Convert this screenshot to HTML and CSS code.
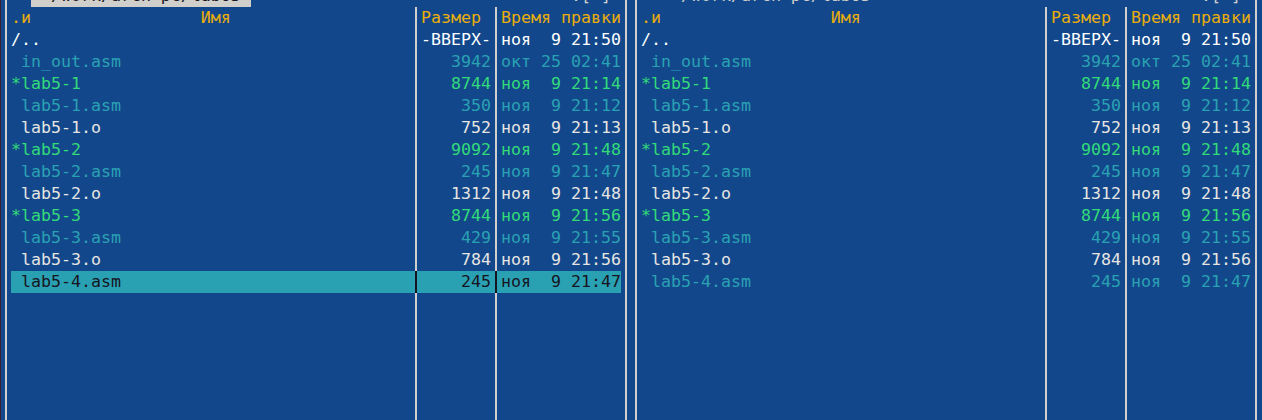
FILE: index.html
```html
<!DOCTYPE html>
<html lang="ru">
<head>
<meta charset="utf-8">
<title>mc</title>
<link rel="stylesheet" href="styles.css">
</head>
<body>
<div class="screen">
  <!-- LEFT PANEL (active) -->
  <div class="panel">
    <div class="col edge"></div>
    <div class="col name">
      <div class="cell top"><span class="frame">&lt;─</span><span class="path active"> ~/work/arch-pc/lab05 </span><span class="frame">────────────────</span></div>
      <div class="cell hdr">.и                 Имя</div>
      <div class="cell dir">/..</div>
      <div class="cell src"> in_out.asm</div>
      <div class="cell exe">*lab5-1</div>
      <div class="cell src"> lab5-1.asm</div>
      <div class="cell nrm"> lab5-1.o</div>
      <div class="cell exe">*lab5-2</div>
      <div class="cell src"> lab5-2.asm</div>
      <div class="cell nrm"> lab5-2.o</div>
      <div class="cell exe">*lab5-3</div>
      <div class="cell src"> lab5-3.asm</div>
      <div class="cell nrm"> lab5-3.o</div>
      <div class="cell sel"> lab5-4.asm</div>
    </div>
    <div class="col sep">
      <div class="cell top"><span class="frame">─</span></div>
      <div class="cell"></div><div class="cell"></div><div class="cell"></div><div class="cell"></div>
      <div class="cell"></div><div class="cell"></div><div class="cell"></div><div class="cell"></div>
      <div class="cell"></div><div class="cell"></div><div class="cell"></div><div class="cell"></div>
      <div class="cell sel-sep"></div>
    </div>
    <div class="col size">
      <div class="cell top"><span class="frame">───────</span></div>
      <div class="cell hdr left">Размер</div>
      <div class="cell dir">-ВВЕРХ-</div>
      <div class="cell src">3942</div>
      <div class="cell exe">8744</div>
      <div class="cell src">350</div>
      <div class="cell nrm">752</div>
      <div class="cell exe">9092</div>
      <div class="cell src">245</div>
      <div class="cell nrm">1312</div>
      <div class="cell exe">8744</div>
      <div class="cell src">429</div>
      <div class="cell nrm">784</div>
      <div class="cell sel">245</div>
    </div>
    <div class="col sep">
      <div class="cell top"><span class="frame">─</span></div>
      <div class="cell"></div><div class="cell"></div><div class="cell"></div><div class="cell"></div>
      <div class="cell"></div><div class="cell"></div><div class="cell"></div><div class="cell"></div>
      <div class="cell"></div><div class="cell"></div><div class="cell"></div><div class="cell"></div>
      <div class="cell sel-sep"></div>
    </div>
    <div class="col time">
      <div class="cell top"><span class="frame">───────.[^]&gt;</span></div>
      <div class="cell hdr">Время правки</div>
      <div class="cell dir">ноя  9 21:50</div>
      <div class="cell src">окт 25 02:41</div>
      <div class="cell exe">ноя  9 21:14</div>
      <div class="cell src">ноя  9 21:12</div>
      <div class="cell nrm">ноя  9 21:13</div>
      <div class="cell exe">ноя  9 21:48</div>
      <div class="cell src">ноя  9 21:47</div>
      <div class="cell nrm">ноя  9 21:48</div>
      <div class="cell exe">ноя  9 21:56</div>
      <div class="cell src">ноя  9 21:55</div>
      <div class="cell nrm">ноя  9 21:56</div>
      <div class="cell sel">ноя  9 21:47</div>
    </div>
    <div class="col edge"></div>
  </div>

  <!-- RIGHT PANEL (inactive) -->
  <div class="panel">
    <div class="col edge"></div>
    <div class="col name">
      <div class="cell top"><span class="frame">&lt;─</span><span class="path"> ~/work/arch-pc/lab05 </span><span class="frame">────────────────</span></div>
      <div class="cell hdr">.и                 Имя</div>
      <div class="cell dir">/..</div>
      <div class="cell src"> in_out.asm</div>
      <div class="cell exe">*lab5-1</div>
      <div class="cell src"> lab5-1.asm</div>
      <div class="cell nrm"> lab5-1.o</div>
      <div class="cell exe">*lab5-2</div>
      <div class="cell src"> lab5-2.asm</div>
      <div class="cell nrm"> lab5-2.o</div>
      <div class="cell exe">*lab5-3</div>
      <div class="cell src"> lab5-3.asm</div>
      <div class="cell nrm"> lab5-3.o</div>
      <div class="cell src"> lab5-4.asm</div>
    </div>
    <div class="col sep">
      <div class="cell top"><span class="frame">─</span></div>
    </div>
    <div class="col size">
      <div class="cell top"><span class="frame">───────</span></div>
      <div class="cell hdr left">Размер</div>
      <div class="cell dir">-ВВЕРХ-</div>
      <div class="cell src">3942</div>
      <div class="cell exe">8744</div>
      <div class="cell src">350</div>
      <div class="cell nrm">752</div>
      <div class="cell exe">9092</div>
      <div class="cell src">245</div>
      <div class="cell nrm">1312</div>
      <div class="cell exe">8744</div>
      <div class="cell src">429</div>
      <div class="cell nrm">784</div>
      <div class="cell src">245</div>
    </div>
    <div class="col sep">
      <div class="cell top"><span class="frame">─</span></div>
    </div>
    <div class="col time">
      <div class="cell top"><span class="frame">───────.[^]&gt;</span></div>
      <div class="cell hdr">Время правки</div>
      <div class="cell dir">ноя  9 21:50</div>
      <div class="cell src">окт 25 02:41</div>
      <div class="cell exe">ноя  9 21:14</div>
      <div class="cell src">ноя  9 21:12</div>
      <div class="cell nrm">ноя  9 21:13</div>
      <div class="cell exe">ноя  9 21:48</div>
      <div class="cell src">ноя  9 21:47</div>
      <div class="cell nrm">ноя  9 21:48</div>
      <div class="cell exe">ноя  9 21:56</div>
      <div class="cell src">ноя  9 21:55</div>
      <div class="cell nrm">ноя  9 21:56</div>
      <div class="cell src">ноя  9 21:47</div>
    </div>
    <div class="col edge"></div>
  </div>
</div>
</body>
</html>
```

FILE: styles.css
```css
html, body {
  margin: 0;
  padding: 0;
  background: #12488b;
  overflow: hidden;
}

.screen {
  display: flex;
  margin-top: -15px;
  height: 440px;
  border-left: 1px solid #3b1f33;
  font-family: "DejaVu Sans Mono", monospace;
  font-size: 16.6px;
  line-height: 22px;
  color: #d0cfcc;
}

.panel {
  display: flex;
  width: 630px;
  flex: none;
}

.col {
  display: flex;
  flex-direction: column;
  flex: none;
}

.edge,
.sep {
  width: 10px;
  background: linear-gradient(to right, transparent 4px, #d0cfcc 4px, #d0cfcc 6px, transparent 6px);
}

.name { width: 400px; }
.size { width: 70px; text-align: right; }
.time { width: 120px; }

.cell {
  height: 22px;
  white-space: pre;
  overflow: hidden;
}

.sep .top {
  background: #12488b;
}

.top .frame { color: #d0cfcc; }

.path {
  display: inline-block;
  height: 22px;
  vertical-align: top;
  color: #d0cfcc;
}

.path.active {
  background: #d0cfcc;
  color: #171421;
}

.hdr { color: #e9ad0c; }
.left { text-align: left; }

.dir { color: #ffffff; }
.nrm { color: #e6e5e2; }
.src { color: #2aa1b3; }
.exe { color: #33da7a; }

.sel {
  background: #2aa1b3;
  color: #171421;
}

.sel-sep {
  background: #2aa1b3 linear-gradient(to right, transparent 4px, #171421 4px, #171421 6px, transparent 6px);
}
```
